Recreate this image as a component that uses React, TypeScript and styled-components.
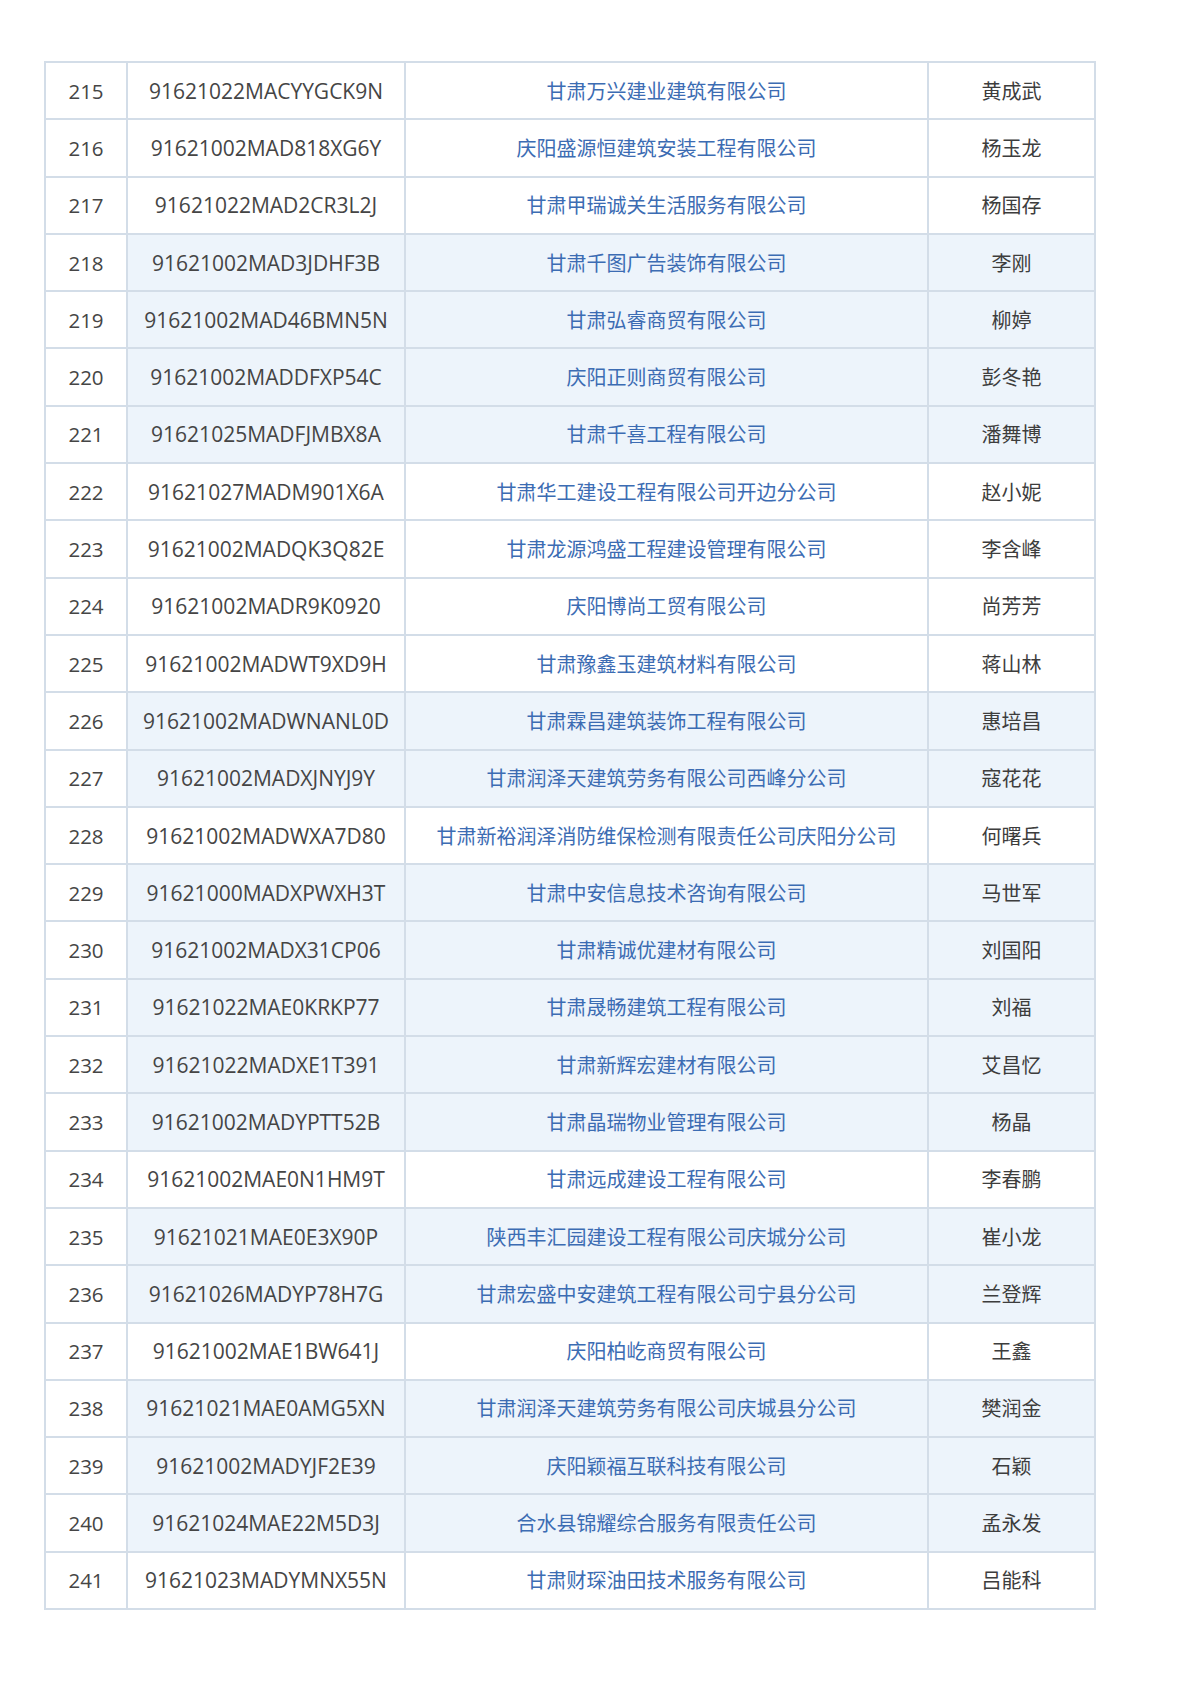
import styled, { createGlobalStyle } from "styled-components";

type Row = [number, string, string, string, boolean];

// number, credit code, company, legal person, tinted row
const rows: Row[] = [
  [215, "91621022MACYYGCK9N", "甘肃万兴建业建筑有限公司", "黄成武", false],
  [216, "91621002MAD818XG6Y", "庆阳盛源恒建筑安装工程有限公司", "杨玉龙", false],
  [217, "91621022MAD2CR3L2J", "甘肃甲瑞诚关生活服务有限公司", "杨国存", false],
  [218, "91621002MAD3JDHF3B", "甘肃千图广告装饰有限公司", "李刚", true],
  [219, "91621002MAD46BMN5N", "甘肃弘睿商贸有限公司", "柳婷", true],
  [220, "91621002MADDFXP54C", "庆阳正则商贸有限公司", "彭冬艳", true],
  [221, "91621025MADFJMBX8A", "甘肃千喜工程有限公司", "潘舞博", true],
  [222, "91621027MADM901X6A", "甘肃华工建设工程有限公司开边分公司", "赵小妮", false],
  [223, "91621002MADQK3Q82E", "甘肃龙源鸿盛工程建设管理有限公司", "李含峰", false],
  [224, "91621002MADR9K0920", "庆阳博尚工贸有限公司", "尚芳芳", false],
  [225, "91621002MADWT9XD9H", "甘肃豫鑫玉建筑材料有限公司", "蒋山林", false],
  [226, "91621002MADWNANL0D", "甘肃霖昌建筑装饰工程有限公司", "惠培昌", true],
  [227, "91621002MADXJNYJ9Y", "甘肃润泽天建筑劳务有限公司西峰分公司", "寇花花", true],
  [228, "91621002MADWXA7D80", "甘肃新裕润泽消防维保检测有限责任公司庆阳分公司", "何曙兵", false],
  [229, "91621000MADXPWXH3T", "甘肃中安信息技术咨询有限公司", "马世军", true],
  [230, "91621002MADX31CP06", "甘肃精诚优建材有限公司", "刘国阳", true],
  [231, "91621022MAE0KRKP77", "甘肃晟畅建筑工程有限公司", "刘福", true],
  [232, "91621022MADXE1T391", "甘肃新辉宏建材有限公司", "艾昌忆", true],
  [233, "91621002MADYPTT52B", "甘肃晶瑞物业管理有限公司", "杨晶", true],
  [234, "91621002MAE0N1HM9T", "甘肃远成建设工程有限公司", "李春鹏", false],
  [235, "91621021MAE0E3X90P", "陕西丰汇园建设工程有限公司庆城分公司", "崔小龙", true],
  [236, "91621026MADYP78H7G", "甘肃宏盛中安建筑工程有限公司宁县分公司", "兰登辉", true],
  [237, "91621002MAE1BW641J", "庆阳柏屹商贸有限公司", "王鑫", false],
  [238, "91621021MAE0AMG5XN", "甘肃润泽天建筑劳务有限公司庆城县分公司", "樊润金", true],
  [239, "91621002MADYJF2E39", "庆阳颖福互联科技有限公司", "石颖", true],
  [240, "91621024MAE22M5D3J", "合水县锦耀综合服务有限责任公司", "孟永发", true],
  [241, "91621023MADYMNX55N", "甘肃财琛油田技术服务有限公司", "吕能科", false],
];

const GlobalStyle = createGlobalStyle`
  html, body {
    margin: 0;
    padding: 0;
    background: #ffffff;
  }
  body {
    font-family: "Open Sans", "Noto Sans CJK SC", sans-serif;
  }
`;

const Page = styled.div`
  width: 1200px;
  min-height: 1695px;
  padding: 61px 0 0 44px;
  box-sizing: border-box;
`;

const Table = styled.table`
  width: 1042px;
  border-collapse: collapse;
  table-layout: fixed;
  border: 2px solid #d3dde8;
`;

const Tr = styled.tr<{ $tint: boolean }>`
  height: 57.3px;
  background: ${({ $tint }) => ($tint ? "#edf4fb" : "#ffffff")};
`;

const Cell = styled.td<{ $width: number }>`
  width: ${({ $width }) => $width}px;
  padding: 0;
  border: 2px solid #d3dde8;
  text-align: center;
  vertical-align: middle;
  font-size: 21px;
  line-height: 26px;
  color: #454545;
  white-space: nowrap;
`;

const NumCell = styled(Cell)`
  background: #ffffff;
  font-size: 20.5px;
`;

const CompanyCell = styled(Cell)`
  color: #3c6cb3;
  font-family: "Noto Sans CJK SC", sans-serif;
  font-size: 20px;
`;

const NameCell = styled(Cell)`
  font-family: "Noto Sans CJK SC", sans-serif;
  font-size: 20px;
  color: #3d3d3d;
`;

export default function App() {
  return (
    <>
      <GlobalStyle />
      <Page>
        <Table>
          <tbody>
            {rows.map(([num, code, company, name, tint]) => (
              <Tr key={num} $tint={tint}>
                <NumCell $width={80}>{num}</NumCell>
                <Cell $width={276}>{code}</Cell>
                <CompanyCell $width={521}>{company}</CompanyCell>
                <NameCell $width={165}>{name}</NameCell>
              </Tr>
            ))}
          </tbody>
        </Table>
      </Page>
    </>
  );
}
